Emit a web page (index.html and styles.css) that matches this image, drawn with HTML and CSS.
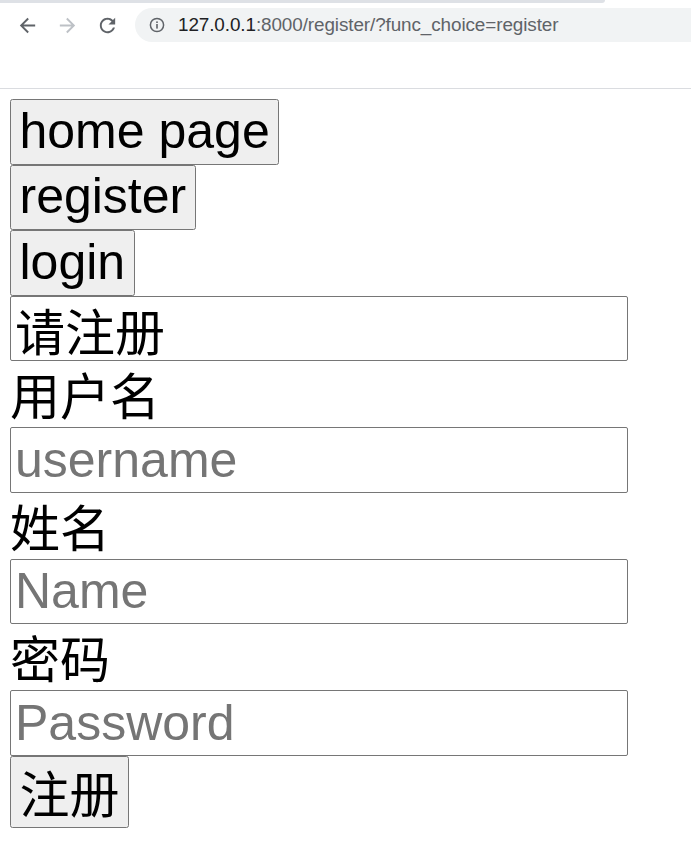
FILE: index.html
```html
<!DOCTYPE html>
<html lang="zh-CN">
<head>
<meta charset="utf-8">
<title>register</title>
<link rel="stylesheet" href="styles.css">
</head>
<body>
<header class="chrome">
  <div class="tabstrip"><div class="tabstrip-fill"></div></div>
  <div class="toolbar">
    <span class="nav-btn">
      <svg class="nav-icon" viewBox="0 0 24 24"><path fill="#5f6368" d="M20 11H7.83l5.59-5.59L12 4l-8 8 8 8 1.41-1.41L7.83 13H20v-2z"/></svg>
    </span>
    <span class="nav-btn">
      <svg class="nav-icon" viewBox="0 0 24 24"><path fill="#bdc1c6" d="M12 4l-1.41 1.41L16.17 11H4v2h12.17l-5.58 5.59L12 20l8-8z"/></svg>
    </span>
    <span class="nav-btn">
      <svg class="nav-icon" viewBox="0 0 24 24"><path fill="#5f6368" d="M17.65 6.35C16.2 4.9 14.21 4 12 4c-4.42 0-7.99 3.580-7.99 8s3.57 8 7.99 8c3.73 0 6.84-2.55 7.73-6h-2.08c-.82 2.33-3.04 4-5.65 4-3.31 0-6-2.690-6-6s2.69-6 6-6c1.66 0 3.14.69 4.22 1.78L13 11h7V4l-2.35 2.35z"/></svg>
    </span>
    <div class="omnibox">
      <svg class="info-icon" viewBox="0 0 16 16">
        <circle cx="8" cy="8" r="6.6" fill="none" stroke="#5f6368" stroke-width="1.5"/>
        <rect x="7.2" y="7" width="1.6" height="4.6" fill="#5f6368"/>
        <rect x="7.2" y="4.4" width="1.6" height="1.6" fill="#5f6368"/>
      </svg>
      <span class="url"><span class="url-host">127.0.0.1</span>:8000/register/?func_choice=register</span>
    </div>
  </div>
</header>
<main class="page">
  <button class="btn" type="button">home page</button>
  <button class="btn" type="button">register</button>
  <button class="btn" type="button">login</button>
  <form class="form">
    <input class="field field--title" type="text" value="请注册">
    <label class="label" for="username">用户名</label>
    <input class="field" id="username" type="text" placeholder="username">
    <label class="label" for="name">姓名</label>
    <input class="field" id="name" type="text" placeholder="Name">
    <label class="label" for="password">密码</label>
    <input class="field" id="password" type="password" placeholder="Password">
    <button class="btn btn--cjk" type="submit">注册</button>
  </form>
</main>
</body>
</html>
```

FILE: styles.css
```css
* {
  box-sizing: border-box;
}

html, body {
  margin: 0;
  padding: 0;
  background: #ffffff;
}

body {
  font-family: "Liberation Sans", "Noto Sans CJK SC", sans-serif;
  color: #000000;
}

/* ---------- browser chrome ---------- */
.chrome {
  height: 89px;
  border-bottom: 1px solid #dadce0;
  display: flex;
  flex-direction: column;
}

.tabstrip {
  height: 3px;
  display: flex;
}

.tabstrip-fill {
  width: 605px;
  height: 3px;
  background: #dee1e6;
  border-bottom-right-radius: 3px;
}

.toolbar {
  margin-top: 5px;
  height: 34px;
  display: flex;
  align-items: center;
  padding-left: 7px;
}

.nav-btn {
  width: 40px;
  height: 34px;
  display: flex;
  align-items: center;
  justify-content: center;
}

.nav-icon {
  width: 23px;
  height: 23px;
}

.omnibox {
  margin-left: 8px;
  flex: 1;
  height: 34px;
  border-radius: 17px 0 0 17px;
  background: #f1f3f4;
  display: flex;
  align-items: center;
  padding-left: 14px;
}

.info-icon {
  width: 16px;
  height: 16px;
  flex: none;
}

.url {
  margin-left: 13px;
  font-family: "Liberation Sans", sans-serif;
  font-size: 18.9px;
  color: #5f6368;
  white-space: nowrap;
  letter-spacing: -0.1px;
}

.url-host {
  color: #202124;
}

/* ---------- page ---------- */
.page {
  padding: 10px;
  display: flex;
  flex-direction: column;
  align-items: flex-start;
}

.form {
  margin: 0;
  display: flex;
  flex-direction: column;
  align-items: flex-start;
}

.btn {
  font-family: "Liberation Sans", "Noto Sans CJK SC", sans-serif;
  font-size: 50px;
  color: #000000;
  height: 65.6px;
  margin: 0;
  padding: 0 8.5px 2px;
  border: 1px solid #767676;
  border-radius: 2.5px;
  background: #efefef;
  line-height: normal;
  display: flex;
  align-items: center;
}

.btn--cjk {
  height: 72px;
  padding: 0 8.5px 2px;
}

.field {
  width: 618px;
  height: 65.6px;
  margin: 0;
  padding: 0 4px;
  border: 1px solid #767676;
  border-radius: 2px;
  font-family: "Liberation Sans", "Noto Sans CJK SC", sans-serif;
  font-size: 50px;
  color: #000000;
  background: #ffffff;
  outline: none;
}

.field::placeholder {
  color: #757575;
}

.field--title {
  padding-left: 4px;
}

.label {
  height: 65.8px;
  line-height: 65.8px;
  font-family: "Noto Sans CJK SC", sans-serif;
  font-size: 50px;
  color: #000000;
}
```
